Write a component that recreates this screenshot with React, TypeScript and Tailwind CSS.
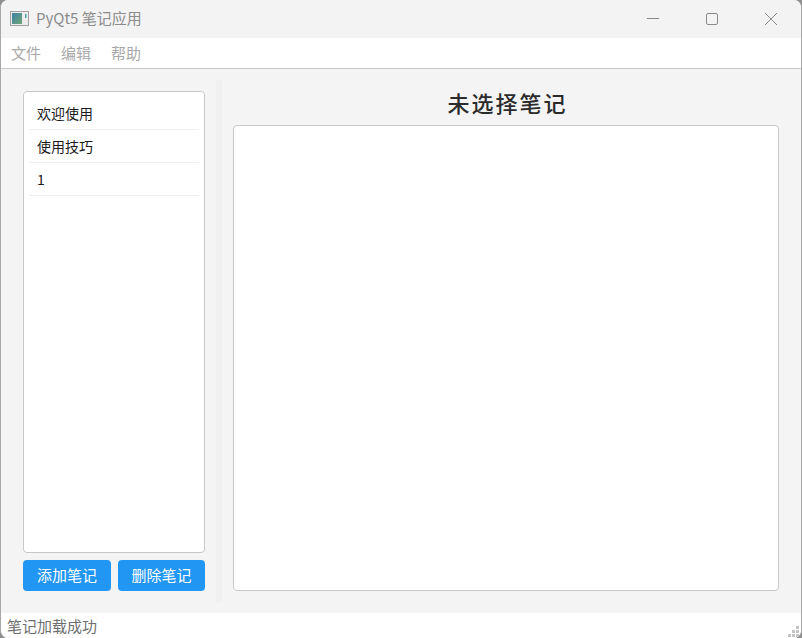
const font = { cjk: "font-['Noto_Sans_CJK_SC','Liberation_Sans',sans-serif]" };

const notes = ["欢迎使用", "使用技巧", "1"];
const menus = ["文件", "编辑", "帮助"];

function AppIcon() {
  return (
    <svg width="19" height="15" viewBox="0 0 19 15">
      <defs>
        <linearGradient id="pane" x1="0" y1="0" x2="1" y2="1">
          <stop offset="0" stopColor="#3d7fa6" />
          <stop offset="1" stopColor="#6fa877" />
        </linearGradient>
      </defs>
      <rect x="0.5" y="0.5" width="18" height="14" fill="#ececec" stroke="#a0a0a0" />
      <rect x="2" y="2" width="10" height="11" fill="url(#pane)" />
      <rect x="15" y="3" width="1.5" height="4" fill="#4aa3a3" />
    </svg>
  );
}

function WindowButtons() {
  return (
    <div className="flex items-center text-[#8a8a8a]">
      <div className="flex w-[58px] justify-center">
        <svg width="14" height="14" viewBox="0 0 14 14">
          <path d="M1 6.5h12" stroke="currentColor" fill="none" />
        </svg>
      </div>
      <div className="flex w-[60px] justify-center">
        <svg width="14" height="14" viewBox="0 0 14 14">
          <rect x="1.5" y="1.5" width="11" height="11" rx="1.5" stroke="currentColor" fill="none" />
        </svg>
      </div>
      <div className="flex w-[58px] justify-center">
        <svg width="14" height="14" viewBox="0 0 14 14">
          <path d="M1 1l12 12M13 1L1 13" stroke="currentColor" fill="none" />
        </svg>
      </div>
    </div>
  );
}

function SizeGrip() {
  const dots = [
    [8, 0],
    [4, 4],
    [8, 4],
    [0, 8],
    [4, 8],
    [8, 8],
  ];
  return (
    <svg width="11" height="11" viewBox="0 0 11 11" className="absolute bottom-[1px] right-[2px]">
      {dots.map(([x, y]) => (
        <rect key={`${x}-${y}`} x={x} y={y} width="3" height="3" fill="#c4c4c4" />
      ))}
    </svg>
  );
}

export default function App() {
  return (
    <div className="h-[638px] w-[802px] bg-[#8f8f8f]">
      <div
        className={`flex h-full w-full flex-col overflow-hidden rounded-[8px] border-l border-r border-[#a8a8a8] bg-[#f4f4f4] ${font.cjk}`}
      >
        <div className="flex h-[38px] shrink-0 items-center justify-between bg-[#f3f3f3] pb-[1px] pl-[9px] pr-[1px]">
          <div className="flex items-center gap-[7px]">
            <AppIcon />
            <span className="text-[15px] text-[#8c8c8c]">PyQt5 笔记应用</span>
          </div>
          <WindowButtons />
        </div>

        <div className="flex h-[31px] shrink-0 items-center gap-[20px] border-b border-[#c8c8c8] bg-white pl-[10px] text-[15px] text-[#a8a8a8]">
          {menus.map((m) => (
            <span key={m}>{m}</span>
          ))}
        </div>

        <div className="flex min-h-0 flex-1 py-[11px] pl-[22px] pr-[22px]">
          <div className="flex w-[182px] shrink-0 flex-col py-[11px]">
            <div className="flex-1 rounded-[4px] border border-[#c8c8c8] bg-white px-[5px] py-[5px]">
              {notes.map((n) => (
                <div
                  key={n}
                  className="flex h-[33px] items-center border-b border-[#f0f0f0] pl-[8px] text-[14px] text-[#1a1a1a]"
                >
                  {n}
                </div>
              ))}
            </div>
            <div className="mt-[7px] flex gap-[7px]">
              <button className="h-[31px] w-[88px] rounded-[4px] bg-[#2196f3] text-[15px] text-white">添加笔记</button>
              <button className="h-[31px] w-[87px] rounded-[4px] bg-[#2196f3] text-[15px] text-white">删除笔记</button>
            </div>
          </div>

          <div className="ml-[11px] w-[6px] shrink-0 bg-[#f0f0f0]" />

          <div className="ml-[11px] flex min-w-0 flex-1 flex-col pt-[11px] pb-[11px]">
            <div className="flex h-[34px] shrink-0 items-center justify-center pb-[11px] pl-[3px] text-[22px] font-medium tracking-[2px] text-[#2b2b2b]">
              未选择笔记
            </div>
            <div className="flex-1 rounded-[4px] border border-[#c8c8c8] bg-white" />
          </div>
        </div>

        <div className="relative flex h-[25px] shrink-0 items-center bg-white pl-[6px] pt-[1px] text-[15px] text-[#6e6e6e]">
          笔记加载成功
          <SizeGrip />
        </div>
      </div>
    </div>
  );
}
